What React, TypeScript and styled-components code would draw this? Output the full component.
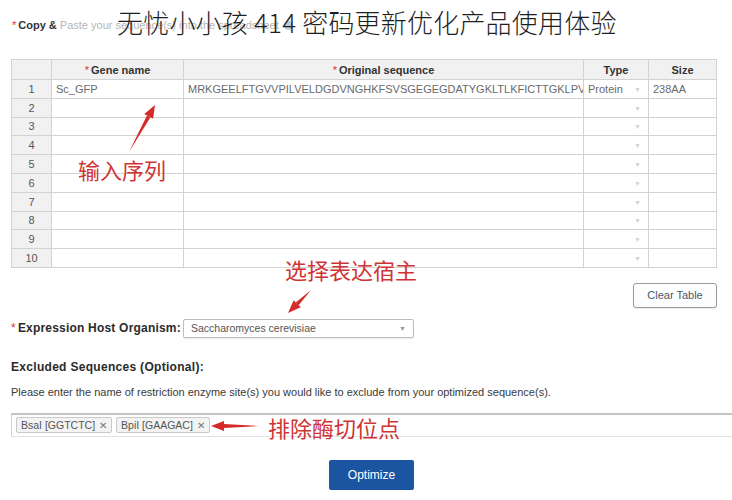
import React from "react";
import styled, {createGlobalStyle} from "styled-components";

const GlobalStyle = createGlobalStyle`
  html, body {
    margin: 0;
    padding: 0;
    background: #ffffff;
  }
  body {
    font-family: "Liberation Sans", Arial, sans-serif;
    color: #333;
  }
`;

const Page = styled.div`
  position: relative;
  width: 732px;
  height: 500px;
  overflow: hidden;
  box-sizing: border-box;
  padding-left: 11px;
`;

const Title = styled.div`
  position: absolute;
  left: 117px;
  top: 4px;
  font-family: "Noto Sans CJK SC", "Noto Sans", sans-serif;
  font-weight: 300;
  font-size: 26px;
  line-height: 36px;
  color: #1f1f1f;
  white-space: nowrap;
  letter-spacing: 0.2px;
`;

const Intro = styled.div`
  padding: 18px 0 0 1px;
  height: 14px;
  margin-bottom: 27px;
  font-size: 11px;
  line-height: 14px;
  color: #b5b5b5;
  display: flex;
  align-items: center;
  gap: 3px;
`;

const Star = styled.span`
  color: #d33;
  font-weight: normal;
  margin-right: 2px;
`;

const Strong = styled.b`
  color: #333;
`;

const HelpDot = styled.span`
  display: inline-block;
  width: 9px;
  height: 9px;
  border-radius: 50%;
  background: #b9cde6;
  margin-left: 2px;
`;

const Grid = styled.table`
  width: 705px;
  table-layout: fixed;
  border-collapse: collapse;
  font-size: 11px;
`;

const HeadCell = styled.th`
  height: 19px;
  padding: 0;
  background: #f1f1f1;
  border: 1px solid #d2d2d2;
  font-weight: bold;
  color: #333;
  text-align: center;
`;

const NumCell = styled.td`
  height: 17.8px;
  padding: 0;
  background: #f1f1f1;
  border: 1px solid #d2d2d2;
  color: #555;
  text-align: center;
`;

const Cell = styled.td<{$dropdown?: boolean}>`
  height: 17.8px;
  padding: 0 4px;
  border: 1px solid #d2d2d2;
  color: #6a6a6a;
  white-space: nowrap;
  overflow: hidden;
  position: relative;
  ${p => p.$dropdown && "padding-right: 14px;"}
`;

const CaretMark = styled.span`
  position: absolute;
  right: 7px;
  top: 50%;
  transform: translateY(-45%);
  font-size: 7px;
  color: #d4d4d4;
`;

const ClearRow = styled.div`
  width: 706px;
  display: flex;
  justify-content: flex-end;
  margin-top: 15px;
`;

const GhostButton = styled.button`
  width: 84px;
  height: 25px;
  border: 1px solid #9a9a9a;
  border-radius: 3px;
  background: #fbfdff;
  font-family: "Liberation Sans", Arial, sans-serif;
  font-size: 11px;
  color: #4a5a6a;
  padding: 0;
  box-shadow: 0 1px 1px rgba(0, 0, 0, .08);
`;

const HostRow = styled.div`
  display: flex;
  align-items: center;
  margin-top: 11px;
  height: 19px;
`;

const Label = styled.div`
  font-size: 12px;
  font-weight: bold;
  color: #2b2b2b;
  width: 172px;
  white-space: nowrap;
  letter-spacing: 0.2px;
`;

const SelectBox = styled.div`
  width: 231px;
  height: 19px;
  box-sizing: border-box;
  border: 1px solid #bdbdbd;
  border-radius: 2px;
  display: flex;
  align-items: center;
  justify-content: space-between;
  padding: 0 7px;
  font-size: 10.5px;
  color: #555;
  box-shadow: 0 1px 1px rgba(0, 0, 0, .08);
`;

const SelectCaret = styled.span`
  font-size: 7px;
  color: #999;
`;

const SectionTitle = styled.div`
  margin-top: 22px;
  font-size: 12px;
  font-weight: bold;
  color: #2b2b2b;
  letter-spacing: 0.3px;
  line-height: 14px;
`;

const HelpText = styled.div`
  margin-top: 11px;
  font-size: 11px;
  color: #3a3a3a;
  line-height: 14px;
`;

const TagBox = styled.div`
  margin-top: 14px;
  height: 24px;
  box-sizing: border-box;
  border-top: 2px solid #c4c4c4;
  border-left: 1px solid #d0d0d0;
  border-bottom: 1px solid #e2e2e2;
  display: flex;
  align-items: center;
  gap: 4px;
  padding-left: 4px;
`;

const Tag = styled.span`
  height: 16px;
  box-sizing: border-box;
  border: 1px solid #c9c9c9;
  background: #f3f3f3;
  border-radius: 2px;
  padding: 0 4px;
  display: flex;
  align-items: center;
  gap: 4px;
  font-size: 10.5px;
  color: #555;
`;

const TagClose = styled.span`
  font-size: 10px;
  color: #777;
`;

const SubmitRow = styled.div`
  width: 721px;
  display: flex;
  justify-content: center;
  margin-top: 23px;
`;

const PrimaryButton = styled.button`
  width: 85px;
  height: 30px;
  border: none;
  border-radius: 2px;
  background: #1b55a1;
  color: #ffffff;
  font-family: "Liberation Sans Narrow", "Liberation Sans", Arial, sans-serif;
  font-size: 12px;
  padding: 0;
`;

const Note = styled.div<{$x: number; $y: number}>`
  position: absolute;
  left: ${p => p.$x}px;
  top: ${p => p.$y}px;
  font-family: "Noto Sans CJK SC", sans-serif;
  font-size: 22px;
  line-height: 28px;
  color: #cf3434;
  white-space: nowrap;
`;

const ArrowLayer = styled.svg`
  position: absolute;
  left: 0;
  top: 0;
  pointer-events: none;
`;

const rows = [
  {gene: "Sc_GFP", seq: "MRKGEELFTGVVPILVELDGDVNGHKFSVSGEGEGDATYGKLTLKFICTTGKLPVPWPTLVTTF", type: "Protein", size: "238AA"},
];

function Arrow({x1, y1, x2, y2}: {x1: number; y1: number; x2: number; y2: number}) {
  const a = Math.atan2(y2 - y1, x2 - x1);
  const len = 13;
  const w = 5;
  const bx = x2 - Math.cos(a) * len;
  const by = y2 - Math.sin(a) * len;
  const px = -Math.sin(a) * w;
  const py = Math.cos(a) * w;
  return (
    <g>
      <path d={`M${x1} ${y1} L${bx + px * 0.4} ${by + py * 0.4} L${bx - px * 0.4} ${by - py * 0.4} Z`} fill="#d42a2a"/>
      <polygon points={`${x2},${y2} ${bx + px},${by + py} ${bx - px},${by - py}`} fill="#d42a2a"/>
    </g>
  );
}

export default function App() {
  const list = Array.from({length: 10}, (_, i) => rows[i] || {gene: "", seq: "", type: "", size: ""});

  return (
    <Page>
      <GlobalStyle/>
      <Intro>
        <span><Star>*</Star><Strong>Copy &amp;</Strong> Paste your sequence(s) into the spreadsheet</span>
        <HelpDot/>
      </Intro>

      <Grid>
        <colgroup>
          <col style={{width: 40}}/>
          <col style={{width: 132}}/>
          <col style={{width: 400}}/>
          <col style={{width: 65}}/>
          <col style={{width: 68}}/>
        </colgroup>
        <thead>
          <tr>
            <HeadCell/>
            <HeadCell><Star>*</Star>Gene name</HeadCell>
            <HeadCell><Star>*</Star>Original sequence</HeadCell>
            <HeadCell>Type</HeadCell>
            <HeadCell>Size</HeadCell>
          </tr>
        </thead>
        <tbody>
          {list.map((r, i) => (
            <tr key={i}>
              <NumCell>{i + 1}</NumCell>
              <Cell>{r.gene}</Cell>
              <Cell>{r.seq}</Cell>
              <Cell $dropdown>{r.type}<CaretMark>▼</CaretMark></Cell>
              <Cell>{r.size}</Cell>
            </tr>
          ))}
        </tbody>
      </Grid>

      <ClearRow>
        <GhostButton>Clear Table</GhostButton>
      </ClearRow>

      <HostRow>
        <Label><Star>*</Star>Expression Host Organism:</Label>
        <SelectBox>
          <span>Saccharomyces cerevisiae</span>
          <SelectCaret>▼</SelectCaret>
        </SelectBox>
      </HostRow>

      <SectionTitle>Excluded Sequences (Optional):</SectionTitle>
      <HelpText>Please enter the name of restriction enzyme site(s) you would like to exclude from your optimized sequence(s).</HelpText>

      <TagBox>
        <Tag>BsaI [GGTCTC] <TagClose>✕</TagClose></Tag>
        <Tag>BpiI [GAAGAC] <TagClose>✕</TagClose></Tag>
      </TagBox>

      <SubmitRow>
        <PrimaryButton>Optimize</PrimaryButton>
      </SubmitRow>

      <Title>无忧小小孩 414 密码更新优化产品使用体验</Title>

      <Note $x={78} $y={155}>输入序列</Note>
      <Note $x={285} $y={255}>选择表达宿主</Note>
      <Note $x={268} $y={413}>排除酶切位点</Note>

      <ArrowLayer width="732" height="500">
        <Arrow x1={129} y1={152} x2={155} y2={105}/>
        <Arrow x1={311} y1={290} x2={288} y2={313}/>
        <Arrow x1={259} y1={426} x2={211} y2={426}/>
      </ArrowLayer>
    </Page>
  );
}
